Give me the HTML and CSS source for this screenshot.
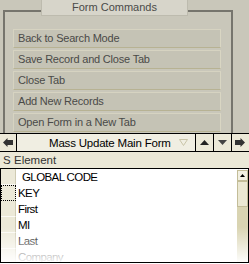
FILE: index.html
```html
<!DOCTYPE html>
<html lang="en">
<head>
    <meta charset="UTF-8">
    <title>Mass Update</title>
    <link rel="stylesheet" href="styles.css">
</head>
<body>
    <div class="screen">
        <!-- Form commands group -->
        <div class="commands">
            <div class="group">
                <div class="cmd">Back to Search Mode</div>
                <div class="cmd">Save Record and Close Tab</div>
                <div class="cmd">Close Tab</div>
                <div class="cmd">Add New Records</div>
                <div class="cmd">Open Form in a New Tab</div>
            </div>
            <div class="tab">Form Commands</div>
        </div>

        <!-- Form navigation bar -->
        <div class="nav">
            <div class="nav-btn nav-back">
                <svg width="10" height="9" viewBox="0 0 10 9"><path d="M0 4.5 L4.5 0 L4.5 2 L10 2 L10 7 L4.5 7 L4.5 9 Z" fill="#333"/></svg>
            </div>
            <div class="form-select">
                <span>Mass Update Main Form</span>
                <svg width="9" height="7" viewBox="0 0 9 7"><path d="M0.5 0.5 L8.5 0.5 L4.5 6.5 Z" fill="none" stroke="#c9c5a9"/></svg>
            </div>
            <div class="nav-btn">
                <svg width="9" height="5" viewBox="0 0 9 5"><path d="M0 5 L4.5 0 L9 5 Z" fill="#222"/></svg>
            </div>
            <div class="nav-btn">
                <svg width="9" height="5" viewBox="0 0 9 5"><path d="M0 0 L9 0 L4.5 5 Z" fill="#444"/></svg>
            </div>
            <div class="nav-btn nav-next">
                <svg width="10" height="9" viewBox="0 0 10 9"><path d="M10 4.5 L5.5 0 L5.5 2 L0 2 L0 7 L5.5 7 L5.5 9 Z" fill="#333"/></svg>
            </div>
        </div>

        <!-- Element list -->
        <div class="head">
            <span class="head-s">S</span>
            <span>Element</span>
        </div>
        <div class="list">
            <div class="rows">
                <div class="row"><span class="sel"></span><span class="cell indent">GLOBAL CODE</span></div>
                <div class="row"><span class="sel focus"></span><span class="cell">KEY</span></div>
                <div class="row"><span class="sel"></span><span class="cell">First</span></div>
                <div class="row"><span class="sel"></span><span class="cell">MI</span></div>
                <div class="row"><span class="sel"></span><span class="cell">Last</span></div>
                <div class="row"><span class="sel"></span><span class="cell">Company</span></div>
            </div>
            <div class="scrollbar">
                <div class="sb-up">
                    <svg width="5" height="3" viewBox="0 0 5 3"><path d="M0 3 L2.5 0 L5 3 Z" fill="#000"/></svg>
                </div>
                <div class="sb-thumb"></div>
                <div class="sb-track"></div>
            </div>
            <div class="fade"></div>
        </div>
    </div>
</body>
</html>
```

FILE: styles.css
```css
body {
    margin: 0;
    background-color: #ffffff;
    font-family: "Liberation Sans", Arial, sans-serif;
    font-size: 11px;
}

.screen {
    width: 249px;
    height: 264px;
    overflow: hidden;
    display: flex;
    flex-direction: column;
    background-color: #ffffff;
}

/* Command group */
.commands {
    position: relative;
    height: 133px;
    flex: none;
    background-color: #c9c7ba;
    padding-top: 10px;
    padding-left: 3px;
    box-sizing: border-box;
}

.group {
    width: 230px;
    height: 123px;
    box-sizing: border-box;
    border: 2px solid #76756d;
    border-bottom: none;
    padding: 17px 10px 0 8px;
    display: flex;
    flex-direction: column;
    gap: 2px;
}

.cmd {
    height: 19px;
    box-sizing: border-box;
    padding-left: 4px;
    line-height: 17px;
    color: #4a4a48;
    background-color: #c5c3b5;
    border: 1px solid #d6d3c1;
    border-bottom-color: #b7b293;
    border-right-color: #d9d6c3;
    letter-spacing: -0.2px;
}

.tab {
    position: absolute;
    left: 41px;
    top: 0;
    width: 147px;
    height: 16px;
    box-sizing: border-box;
    background-color: #d7d5ca;
    border: 1px solid #bdbbae;
    border-top: none;
    color: #4a4a48;
    text-align: center;
    line-height: 14px;
}

/* Navigation bar */
.nav {
    flex: none;
    display: flex;
    height: 19px;
    box-sizing: border-box;
    border-top: 1px solid #000;
    border-bottom: 1px solid #000;
    background-color: #ece9d8;
}

.nav-btn {
    width: 17px;
    flex: none;
    display: flex;
    align-items: center;
    justify-content: center;
    border-right: 1px solid #000;
}

.nav-back {
    width: 16px;
}

.nav-next {
    width: 16px;
    border-right: none;
}

.form-select {
    width: 179px;
    flex: none;
    display: flex;
    align-items: center;
    padding-left: 32px;
    padding-right: 7px;
    box-sizing: border-box;
    border-right: 1px solid #000;
    background-color: #f0eee2;
    color: #000;
    font-size: 11.5px;
    letter-spacing: -0.2px;
}

.form-select svg {
    margin-left: auto;
}

/* Element list */
.head {
    flex: none;
    height: 17px;
    box-sizing: border-box;
    border-bottom: 1px solid #000;
    background-color: #ebe8d7;
    color: #333;
    display: flex;
    align-items: center;
    padding-left: 3px;
    font-size: 11.5px;
}

.head-s {
    width: 11px;
}

.list {
    position: relative;
    flex: none;
    height: 94px;
    box-sizing: border-box;
    border-left: 1px solid #000;
    border-right: 1px solid #000;
    border-bottom: 1px solid #000;
    display: flex;
    overflow: hidden;
}

.rows {
    flex: 1;
}

.row {
    display: flex;
    height: 16px;
    align-items: center;
}

.sel {
    width: 15px;
    height: 16px;
    flex: none;
    box-sizing: border-box;
    background-color: #ece9d8;
    border-right: 1px solid #cfcbb3;
    border-bottom: 1px solid #fbfaf5;
}

.sel.focus {
    border: 1px dotted #000;
}

.cell {
    padding-left: 2px;
    color: #000;
    font-size: 11.5px;
    letter-spacing: -0.6px;
}

.cell.indent {
    padding-left: 6px;
}

.scrollbar {
    width: 11px;
    flex: none;
    display: flex;
    flex-direction: column;
    padding-top: 1px;
}

.sb-up {
    height: 11px;
    box-sizing: border-box;
    border: 1px solid #c3bd98;
    background-color: #f2f0e3;
    display: flex;
    align-items: center;
    justify-content: center;
}

.sb-thumb {
    height: 26px;
    box-sizing: border-box;
    border: 1px solid #c3bd98;
    background-color: #ebe8d3;
}

.sb-track {
    flex: 1;
    background-color: #d9d4b2;
}

.fade {
    position: absolute;
    left: 0;
    right: 0;
    top: 0;
    bottom: 0;
    background: linear-gradient(to bottom, rgba(255, 255, 255, 0) 0, rgba(255, 255, 255, 0) 58px, rgba(255, 255, 255, 0.95) 93px);
    pointer-events: none;
}
```
